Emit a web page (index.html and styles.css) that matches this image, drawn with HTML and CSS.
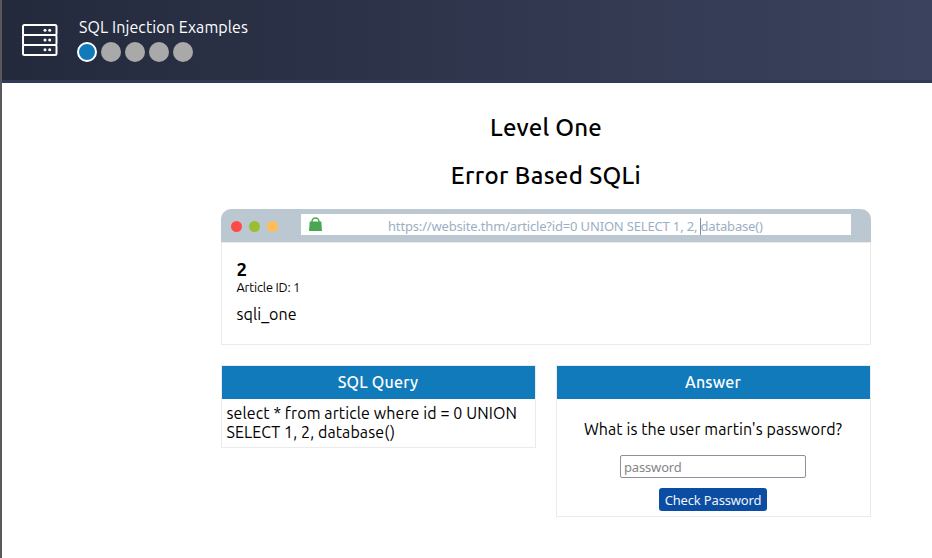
FILE: index.html
```html
<!DOCTYPE html>
<html lang="en">
<head>
<meta charset="utf-8">
<title>SQL Injection Examples</title>
<link rel="stylesheet" href="styles.css">
</head>
<body>
<header class="topbar">
  <svg class="server" width="36" height="33" viewBox="0 0 36 33" fill="none" stroke="#fff" stroke-width="2">
    <rect x="1" y="1" width="33.500" height="10" rx="1.5"/>
    <rect x="1" y="11" width="33.500" height="10" rx="1.5"/>
    <rect x="1" y="21" width="33.500" height="10" rx="1.5"/>
    <g fill="#fff" stroke="none"><circle cx="23" cy="6.3" r="1.5"/><circle cx="27.700" cy="6.3" r="1.5"/><circle cx="23" cy="15.900" r="1.5"/><circle cx="27.700" cy="15.900" r="1.5"/><circle cx="23" cy="25.800" r="1.5"/><circle cx="27.700" cy="25.800" r="1.5"/></g>
  </svg>
  <div>
    <div class="title"><span>SQL Injection Examples</span></div>
    <div class="steps"><i class="step active"></i><i class="step"></i><i class="step"></i><i class="step"></i><i class="step"></i></div>
  </div>
</header>
<main class="content">
  <h1 class="heading"><span class="level">Level One</span></h1>
  <h2 class="heading"><span class="kind">Error Based SQLi</span></h2>
  <section class="browser">
    <div class="chrome">
      <i class="dot red"></i><i class="dot green"></i><i class="dot amber"></i>
      <div class="address">
        <svg class="lock" width="13" height="15" viewBox="0 0 13 15"><path d="M3 6V4.500a3.500 3.500 0 0 1 7 0V6" fill="none" stroke="#4ba651" stroke-width="1.500"/><path d="M.7 4.500h11.600l.7 9.500H0z" fill="#4ba651"/></svg>
        <span class="url">https://website.thm/article?id=0 UNION SELECT 1, 2, <i class="caret"></i>database()</span>
      </div>
    </div>
    <div class="page">
      <div class="article-title">2</div>
      <div class="article-id"><span>Article ID: 1</span></div>
      <div class="article-body"><span>sqli_one</span></div>
    </div>
  </section>
  <div class="panels">
    <section class="panel">
      <h3 class="panel-title"><span class="t-query">SQL Query</span></h3>
      <div class="query"><span class="q1">select * from article where id = 0 UNION</span><br><span class="q2">SELECT 1, 2, database()</span></div>
    </section>
    <section class="panel">
      <h3 class="panel-title"><span class="t-answer">Answer</span></h3>
      <div class="answer">
        <div class="question"><span>What is the user martin's password?</span></div>
        <input class="password" type="text" placeholder="password">
        <button class="check"><span>Check Password</span></button>
      </div>
    </section>
  </div>
</main>
</body>
</html>
```
FILE: styles.css
```css
* { box-sizing: border-box; }
body {
  margin: 0;
  height: 558px;
  overflow: hidden;
  border-left: 2px solid #59595b;
  background: #fff;
  color: #000;
  font: 16px/19px Ubuntu, "Noto Sans", sans-serif;
}
span { white-space: nowrap; }
.topbar {
  height: 83px;
  display: flex;
  padding: 18px 0 0 20px;
  gap: 19px;
  border-bottom: 3px solid #303b5a;
  background: linear-gradient(90deg, #232a3c, #3b425d);
}
.server { margin-top: 6px; }
.title { height: 24px; padding-left: 2px; color: #fff; letter-spacing: 0.1px; }
.steps { display: flex; gap: 4px; }
.step { width: 20px; height: 20px; border-radius: 50%; background: #a9a9a9; }
.step.active { background: #107aba; border: 2px solid #fff; }
.content { width: 650px; margin: 31px 0 0 219px; }
.heading { margin: 0 0 20px; font-size: 24px; line-height: 28px; font-weight: 500; text-align: center; }
.level { letter-spacing: 0.2px; }
.kind { letter-spacing: 0.35px; }
.browser { height: 136px; margin-top: -1px; }
.chrome {
  display: flex;
  height: 33px;
  padding: 5px 20px 0 10px;
  gap: 7px;
  border-radius: 10px 10px 0 0;
  background: #bbc7d1;
}
.dot { width: 11px; height: 11px; margin-top: 7px; border-radius: 50%; }
.red { background: #ff4b47; }
.green { background: #9bbd35; }
.amber { background: #ffbd59; }
.address {
  display: flex;
  flex: 1;
  height: 21px;
  margin-left: 16px;
  padding-left: 8px;
  background: #fff;
}
.lock { margin-top: 3px; }
.url { margin-left: 66px; color: #9bafc3; font: 13px/24px "Noto Sans", sans-serif; letter-spacing: -0.165px; }
.caret { display: inline-block; width: 1px; height: 17px; margin-right: -1px; vertical-align: -4px; background: #7890a8; }
.page { height: 103px; padding: 16px 14.500px; border: 1px solid #ebebeb; }
.article-title { font-size: 18.720px; line-height: 21px; font-weight: 700; }
.article-id { font-size: 12.800px; line-height: 15px; letter-spacing: -0.2px; }
.article-body { margin-top: 10px; letter-spacing: 0.07px; }
.panels { display: grid; grid-template-columns: 315px 315px; gap: 20px; margin-top: 20px; align-items: start; }
.panel { border: 1px solid #ebebeb; }
.panel-title { height: 33px; margin: 0; background: #107aba; color: #fff; text-align: center; font-size: 16px; line-height: 32px; font-weight: 500; }
.t-query, .t-answer { letter-spacing: 0.2px; margin-right: 1px; }
.query { height: 48px; padding: 5px 4.500px; letter-spacing: 0.1px; }
.answer { display: flex; flex-direction: column; align-items: center; height: 117px; padding: 21px 1px 0 0; }
.question { letter-spacing: 0.07px; }
.password { width: 186px; height: 23px; margin-top: 16px; padding: 1px 3px; border: 1px solid #8f8f9d; border-radius: 2px; font: 13px "Noto Sans", sans-serif; letter-spacing: -0.165px; }
.password::placeholder { color: #858585; }
.check { width: 108px; height: 23px; margin-top: 10px; padding: 1px 0 0; border: 0; border-radius: 3px; background: #0b4da2; color: #f1f5fa; font: 13px/22px "Noto Sans", sans-serif; letter-spacing: -0.165px; }
```
